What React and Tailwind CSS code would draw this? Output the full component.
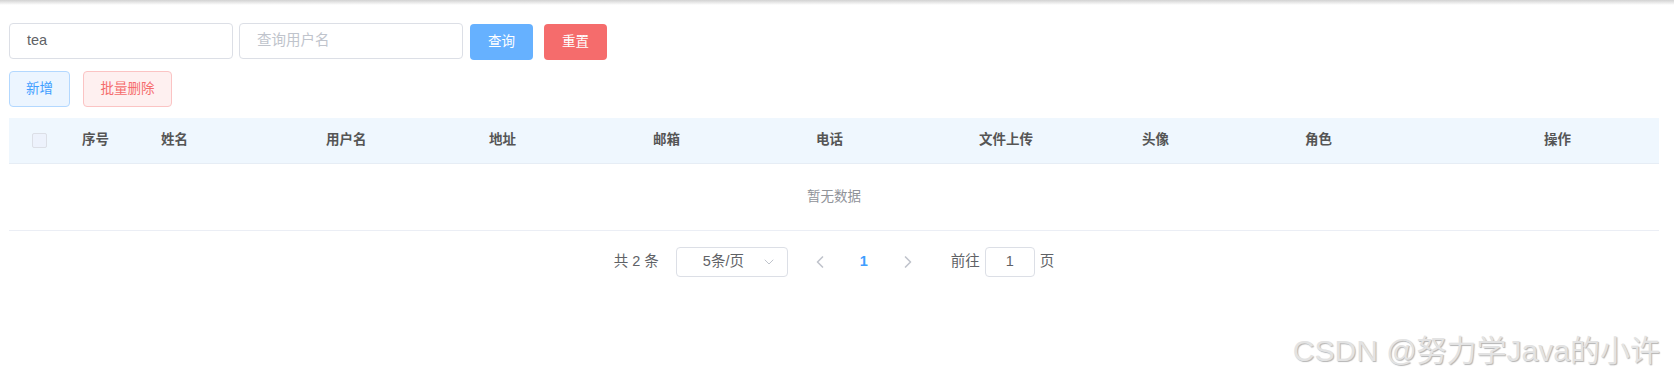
import { ChevronLeft, ChevronRight, ChevronDown } from 'lucide-react'

const columns = [
  { label: '序号', w: 'w-[79px]' },
  { label: '姓名', w: 'w-[165px]' },
  { label: '用户名', w: 'w-[163px]' },
  { label: '地址', w: 'w-[164px]' },
  { label: '邮箱', w: 'w-[163px]' },
  { label: '电话', w: 'w-[163px]' },
  { label: '文件上传', w: 'w-[163px]' },
  { label: '头像', w: 'w-[163px]' },
  { label: '角色', w: 'w-[239px]' },
  { label: '操作', w: 'flex-1' },
]

export default function App() {
  return (
    <div className="relative h-[386px] bg-white font-['Liberation_Sans','Noto_Sans_CJK_SC',sans-serif] text-[#606266]">
      {/* top bar shadow */}
      <div className="h-[5px] bg-gradient-to-b from-[#d2d2d2] to-white" />

      <div className="pt-[18px] pl-[9px] pr-[15px]">
        {/* search row */}
        <div className="flex items-start">
          <div className="flex items-center w-[224px] h-[36px] border border-[#dcdfe6] rounded-[4px] pl-[17px] text-[14.5px] text-[#606266]">
            tea
          </div>
          <div className="flex items-center w-[224px] h-[36px] ml-[6px] border border-[#dcdfe6] rounded-[4px] pl-[17px] text-[14.5px] text-[#c0c4cc]">
            查询用户名
          </div>
          <button className="mt-px ml-[7px] w-[63px] h-[36px] rounded-[4px] bg-[#66b1ff] text-white text-[13.5px]">
            查询
          </button>
          <button className="mt-px ml-[11px] w-[63px] h-[36px] rounded-[4px] bg-[#f56c6c] text-white text-[13.5px]">
            重置
          </button>
        </div>

        {/* action row */}
        <div className="flex mt-[11px]">
          <button className="w-[61px] h-[36px] rounded-[4px] bg-[#ecf5ff] border border-[#b3d8ff] text-[#409eff] text-[13.5px]">
            新增
          </button>
          <button className="ml-[13px] w-[89px] h-[36px] rounded-[4px] bg-[#fef0f0] border border-[#fbc4c4] text-[#f56c6c] text-[13.5px]">
            批量删除
          </button>
        </div>

        {/* table */}
        <div className="mt-[11px]">
          <div className="flex items-center h-[46px] bg-[#eff7fe] border-b border-[#e6edf5] text-[13.5px] font-bold text-[#555]">
            <div className="w-[73px] pl-[23px] flex items-center">
              <span className="block w-[15px] h-[15px] rounded-[2px] border border-[#dcdfe6] bg-[#edf2fc]" />
            </div>
            {columns.map((c) => (
              <div key={c.label} className={c.w}>
                {c.label}
              </div>
            ))}
          </div>
          <div className="flex items-center justify-center h-[67px] border-b border-[#ebeef5] text-[13.5px] text-[#909399]">
            暂无数据
          </div>
        </div>

        {/* pagination */}
        <div className="flex items-center justify-center mt-[16px] h-[30px] text-[14.5px] text-[#606266]">
          <span>共 2 条</span>
          <div className="ml-[17px] flex items-center justify-between w-[112px] h-[30px] border border-[#dcdfe6] rounded-[4px] pl-[26px] pr-[10px]">
            <span>5条/页</span>
            <ChevronDown size={16} strokeWidth={1.5} className="text-[#c0c4cc]" />
          </div>
          <button className="ml-[10px] w-[44px] h-[30px] flex items-center justify-center text-[#c0c4cc]">
            <ChevronLeft size={20} strokeWidth={2} />
          </button>
          <span className="w-[44px] text-center font-bold text-[#409eff]">1</span>
          <button className="w-[44px] h-[30px] flex items-center justify-center text-[#c0c4cc]">
            <ChevronRight size={20} strokeWidth={2} />
          </button>
          <span className="ml-[21px]">前往</span>
          <div className="ml-[5px] flex items-center justify-center w-[50px] h-[30px] border border-[#dcdfe6] rounded-[4px]">
            1
          </div>
          <span className="ml-[5px]">页</span>
        </div>
      </div>

      {/* watermark */}
      <div className="absolute top-[328px] right-[14px] text-[30px] text-[#e3e3e3] [text-shadow:1px_1px_1px_#b4b4b4] select-none">
        CSDN @努力学Java的小许
      </div>
    </div>
  )
}
